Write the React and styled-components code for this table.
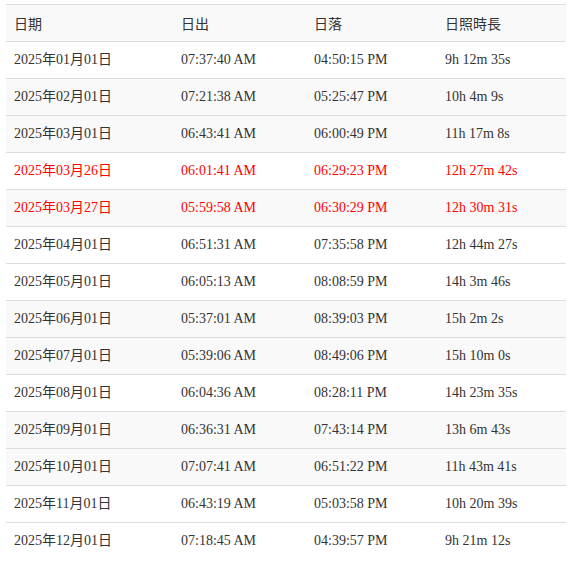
import React from 'react';
import styled, { createGlobalStyle } from 'styled-components';

const GlobalStyle = createGlobalStyle`
  html, body {
    margin: 0;
    padding: 0;
    background: #fff;
  }
  body {
    font-family: "Liberation Serif", "Noto Sans CJK TC", serif;
    font-size: 14px;
    color: #333;
  }
`;

const Wrapper = styled.div`
  padding: 4px 0 0 6px;
`;

const Table = styled.table`
  width: 560px;
  border-collapse: collapse;
  border-spacing: 0;
  table-layout: fixed;
`;

const Col = styled.col`
  width: ${(p) => p.$w}px;
`;

const HeadRow = styled.tr`
  background: #f9f9f9;
`;

const Th = styled.th`
  text-align: left;
  font-weight: normal;
  padding: 8px;
  line-height: 20px;
  border-top: 1px solid #ddd;
  font-family: "Noto Sans CJK TC", "Liberation Sans", sans-serif;
  font-size: 14px;
  color: #333;
`;

const Row = styled.tr`
  background: ${(p) => (p.$striped ? '#f9f9f9' : '#fff')};
  color: ${(p) => (p.$highlight ? '#ff0000' : '#333')};
`;

const Td = styled.td`
  padding: 8px;
  line-height: 20px;
  border-top: 1px solid #ddd;
  white-space: nowrap;
`;

const rows = [
  ['2025年01月01日', '07:37:40 AM', '04:50:15 PM', '9h 12m 35s', false, false],
  ['2025年02月01日', '07:21:38 AM', '05:25:47 PM', '10h 4m 9s', true, false],
  ['2025年03月01日', '06:43:41 AM', '06:00:49 PM', '11h 17m 8s', true, false],
  ['2025年03月26日', '06:01:41 AM', '06:29:23 PM', '12h 27m 42s', false, true],
  ['2025年03月27日', '05:59:58 AM', '06:30:29 PM', '12h 30m 31s', true, true],
  ['2025年04月01日', '06:51:31 AM', '07:35:58 PM', '12h 44m 27s', false, false],
  ['2025年05月01日', '06:05:13 AM', '08:08:59 PM', '14h 3m 46s', false, false],
  ['2025年06月01日', '05:37:01 AM', '08:39:03 PM', '15h 2m 2s', true, false],
  ['2025年07月01日', '05:39:06 AM', '08:49:06 PM', '15h 10m 0s', true, false],
  ['2025年08月01日', '06:04:36 AM', '08:28:11 PM', '14h 23m 35s', false, false],
  ['2025年09月01日', '06:36:31 AM', '07:43:14 PM', '13h 6m 43s', true, false],
  ['2025年10月01日', '07:07:41 AM', '06:51:22 PM', '11h 43m 41s', true, false],
  ['2025年11月01日', '06:43:19 AM', '05:03:58 PM', '10h 20m 39s', false, false],
  ['2025年12月01日', '07:18:45 AM', '04:39:57 PM', '9h 21m 12s', false, false],
];

export default function App() {
  return (
    <Wrapper>
      <GlobalStyle />
      <Table>
        <colgroup>
          <Col $w={167} />
          <Col $w={133} />
          <Col $w={131} />
          <Col $w={129} />
        </colgroup>
        <thead>
          <HeadRow>
            <Th>日期</Th>
            <Th>日出</Th>
            <Th>日落</Th>
            <Th>日照時長</Th>
          </HeadRow>
        </thead>
        <tbody>
          {rows.map(([date, rise, set, len, striped, hl]) => (
            <Row key={date} $striped={striped} $highlight={hl}>
              <Td>{date}</Td>
              <Td>{rise}</Td>
              <Td>{set}</Td>
              <Td>{len}</Td>
            </Row>
          ))}
        </tbody>
      </Table>
    </Wrapper>
  );
}
